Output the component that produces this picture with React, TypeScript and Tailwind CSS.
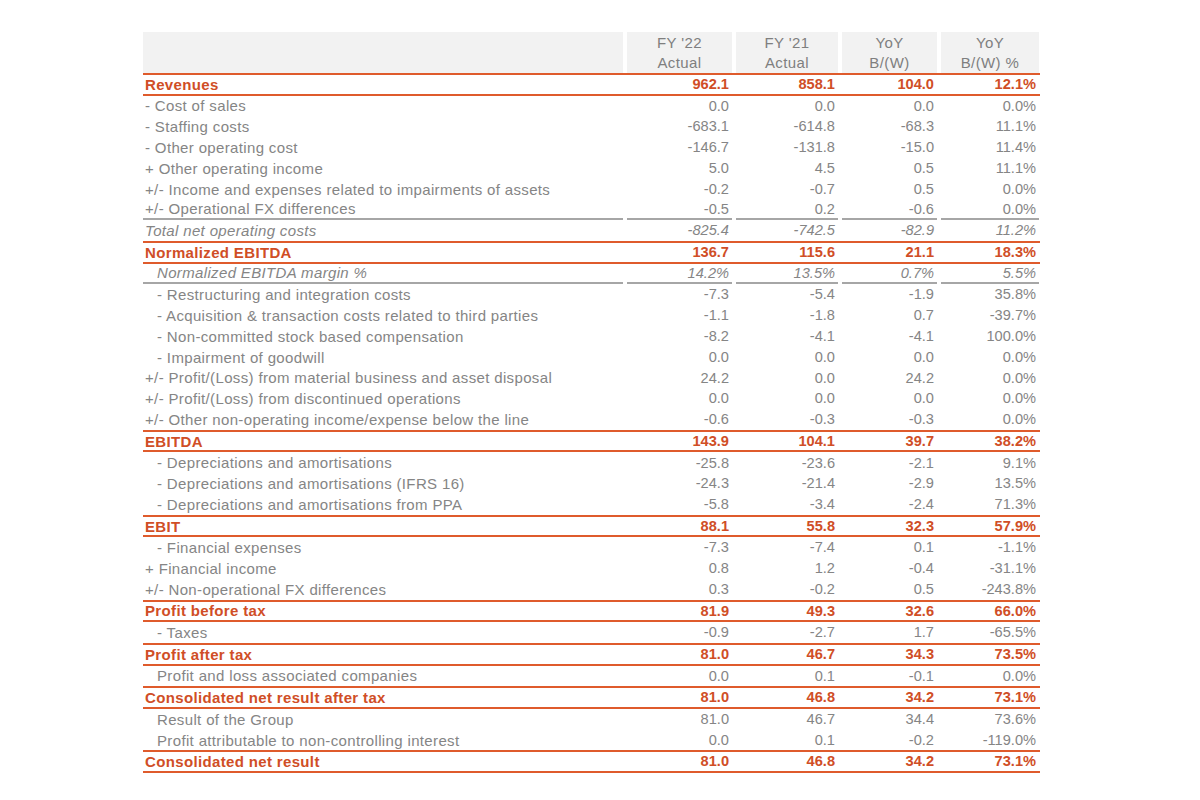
type Kind = "bold" | "normal" | "italic";

type Row = {
  label: string;
  values: [string, string, string, string];
  kind?: Kind;
  indent?: boolean;
  rule?: boolean;
};

const rows: Row[] = [
  { label: "Revenues", values: ["962.1", "858.1", "104.0", "12.1%"], kind: "bold" },
  { label: "- Cost of sales", values: ["0.0", "0.0", "0.0", "0.0%"] },
  { label: "- Staffing costs", values: ["-683.1", "-614.8", "-68.3", "11.1%"] },
  { label: "- Other operating cost", values: ["-146.7", "-131.8", "-15.0", "11.4%"] },
  { label: "+ Other operating income", values: ["5.0", "4.5", "0.5", "11.1%"] },
  { label: "+/- Income and expenses related to impairments of assets", values: ["-0.2", "-0.7", "0.5", "0.0%"] },
  { label: "+/- Operational FX differences", values: ["-0.5", "0.2", "-0.6", "0.0%"], rule: true },
  { label: "Total net operating costs", values: ["-825.4", "-742.5", "-82.9", "11.2%"], kind: "italic" },
  { label: "Normalized EBITDA", values: ["136.7", "115.6", "21.1", "18.3%"], kind: "bold" },
  { label: "Normalized EBITDA margin %", values: ["14.2%", "13.5%", "0.7%", "5.5%"], kind: "italic", indent: true, rule: true },
  { label: "- Restructuring and integration costs", values: ["-7.3", "-5.4", "-1.9", "35.8%"], indent: true },
  { label: "- Acquisition & transaction costs related to third parties", values: ["-1.1", "-1.8", "0.7", "-39.7%"], indent: true },
  { label: "- Non-committed stock based compensation", values: ["-8.2", "-4.1", "-4.1", "100.0%"], indent: true },
  { label: "- Impairment of goodwill", values: ["0.0", "0.0", "0.0", "0.0%"], indent: true },
  { label: "+/- Profit/(Loss) from material business and asset disposal", values: ["24.2", "0.0", "24.2", "0.0%"] },
  { label: "+/- Profit/(Loss) from discontinued operations", values: ["0.0", "0.0", "0.0", "0.0%"] },
  { label: "+/- Other non-operating income/expense below the line", values: ["-0.6", "-0.3", "-0.3", "0.0%"] },
  { label: "EBITDA", values: ["143.9", "104.1", "39.7", "38.2%"], kind: "bold" },
  { label: "- Depreciations and amortisations", values: ["-25.8", "-23.6", "-2.1", "9.1%"], indent: true },
  { label: "- Depreciations and amortisations (IFRS 16)", values: ["-24.3", "-21.4", "-2.9", "13.5%"], indent: true },
  { label: "- Depreciations and amortisations from PPA", values: ["-5.8", "-3.4", "-2.4", "71.3%"], indent: true },
  { label: "EBIT", values: ["88.1", "55.8", "32.3", "57.9%"], kind: "bold" },
  { label: "- Financial expenses", values: ["-7.3", "-7.4", "0.1", "-1.1%"], indent: true },
  { label: "+ Financial income", values: ["0.8", "1.2", "-0.4", "-31.1%"] },
  { label: "+/- Non-operational FX differences", values: ["0.3", "-0.2", "0.5", "-243.8%"] },
  { label: "Profit before tax", values: ["81.9", "49.3", "32.6", "66.0%"], kind: "bold" },
  { label: "- Taxes", values: ["-0.9", "-2.7", "1.7", "-65.5%"], indent: true },
  { label: "Profit after tax", values: ["81.0", "46.7", "34.3", "73.5%"], kind: "bold" },
  { label: "Profit and loss associated companies", values: ["0.0", "0.1", "-0.1", "0.0%"], indent: true },
  { label: "Consolidated net result after tax", values: ["81.0", "46.8", "34.2", "73.1%"], kind: "bold" },
  { label: "Result of the Group", values: ["81.0", "46.7", "34.4", "73.6%"], indent: true },
  { label: "Profit attributable to non-controlling interest", values: ["0.0", "0.1", "-0.2", "-119.0%"], indent: true },
  { label: "Consolidated net result", values: ["81.0", "46.8", "34.2", "73.1%"], kind: "bold" },
];

const headers: [string, string][] = [
  ["FY '22", "Actual"],
  ["FY '21", "Actual"],
  ["YoY", "B/(W)"],
  ["YoY", "B/(W) %"],
];

const cols = "grid grid-cols-[480px_105px_102px_95px_98px] gap-x-[4px]";

function TableRow({ row }: { row: Row }) {
  const bold = row.kind === "bold";
  const italic = row.kind === "italic";
  const tone = bold ? "font-bold text-[#d04e26]" : "text-[#858585]";
  const cell = [
    "flex items-center h-full whitespace-nowrap",
    row.rule ? "border-b-2 border-[#a6a6a6]" : "",
    italic ? "italic" : "",
  ].join(" ");

  return (
    <div
      className={`${cols} ${
        bold ? "h-[22.5px] border-y-2 border-[#df5b2c]" : "h-[20.8px]"
      } ${tone}`}
    >
      <div
        className={`${cell} text-[15px] tracking-[0.35px] ${
          row.indent ? "pl-[14px]" : "pl-[2px]"
        }`}
      >
        {row.label}
      </div>
      {row.values.map((v, i) => (
        <div key={i} className={`${cell} justify-end pr-[3px] text-[14.6px]`}>
          {v}
        </div>
      ))}
    </div>
  );
}

export default function App() {
  return (
    <div className="min-h-[800px] w-[1200px] bg-white pt-[32px] pl-[143px] font-['Liberation_Sans',Arial,sans-serif] text-[14px] leading-none">
      <div className="w-[897px]">
        <div className={`${cols} h-[41px]`}>
          <div className="bg-[#f2f2f2]" />
          {headers.map(([a, b], i) => (
            <div
              key={i}
              className="flex flex-col items-center justify-center gap-[5px] bg-[#f2f2f2] text-[15px] tracking-[0.4px] text-[#7f7f7f]"
            >
              <span>{a}</span>
              <span>{b}</span>
            </div>
          ))}
        </div>
        {rows.map((row, i) => (
          <TableRow key={i} row={row} />
        ))}
      </div>
    </div>
  );
}
